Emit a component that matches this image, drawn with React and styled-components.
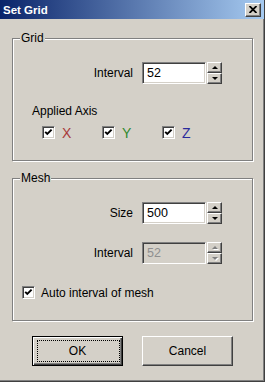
import React from 'react';
import styled, { createGlobalStyle } from 'styled-components';

const GlobalStyle = createGlobalStyle`
  body {
    margin: 0;
    font-family: 'Liberation Sans', Arial, sans-serif;
    font-size: 12px;
    color: #000;
  }
`;

const Window = styled.div`
  width: 265px;
  height: 382px;
  box-sizing: border-box;
  background: #d4d0c8;
  border-right: 1px solid #404040;
  border-bottom: 1px solid #404040;
  box-shadow: inset -1px -1px 0 #808080;
  display: flex;
  flex-direction: column;
`;

const TitleBar = styled.div`
  height: 19px;
  flex-shrink: 0;
  display: flex;
  align-items: center;
  justify-content: space-between;
  padding: 0 3px 0 3px;
  background: linear-gradient(to right, #0a246a, #a6caf0);
`;

const Title = styled.div`
  color: #fff;
  font-weight: bold;
  font-size: 11.5px;
`;

const CloseButton = styled.div`
  width: 16px;
  height: 14px;
  box-sizing: border-box;
  background: #d4d0c8;
  border: 1px solid;
  border-color: #fff #404040 #404040 #fff;
  box-shadow: inset -1px -1px 0 #808080;
  display: flex;
  align-items: center;
  justify-content: center;
`;

const Body = styled.div`
  display: flex;
  flex-direction: column;
  padding: 19px 11px 0 12px;
`;

const Group = styled.div`
  position: relative;
  height: ${p => p.$h}px;
  box-sizing: border-box;
  border: 1px solid #808080;
  box-shadow: inset 1px 1px 0 #fff, 1px 1px 0 #fff;
  margin-top: ${p => p.$mt || 0}px;
  padding-top: 23px;
  display: flex;
  flex-direction: column;
`;

const GroupLabel = styled.div`
  position: absolute;
  top: -8px;
  left: 7px;
  padding: 0 1px;
  line-height: 14px;
  background: #d4d0c8;
`;

const FieldRow = styled.div`
  display: flex;
  align-items: center;
  justify-content: flex-end;
  padding-right: 30px;
  height: 22px;
  margin-top: ${p => p.$mt || 0}px;
`;

const FieldLabel = styled.span`
  margin-right: 9px;
`;

const Field = styled.div`
  width: 64px;
  height: 22px;
  box-sizing: border-box;
  border: 1px solid;
  border-color: #808080 #fff #fff #808080;
  box-shadow: inset 1px 1px 0 #404040, inset -1px -1px 0 #d4d0c8;
  background: ${p => (p.$disabled ? '#d4d0c8' : '#fff')};
  color: ${p => (p.$disabled ? '#8f8f8f' : '#000')};
  padding-left: 4px;
  font-size: 12.5px;
  line-height: 20px;
`;

const Spinner = styled.div`
  margin-left: 1px;
  width: 15px;
  height: 22px;
  display: flex;
  flex-direction: column;
`;

const SpinButton = styled.div`
  flex: 1;
  box-sizing: border-box;
  border: 1px solid;
  border-color: #fff #404040 #404040 #fff;
  box-shadow: inset -1px -1px 0 #808080;
  background: #d4d0c8;
  display: flex;
  align-items: center;
  justify-content: center;
`;

const SectionLabel = styled.div`
  margin-top: 20px;
  padding-left: 19px;
  line-height: 14px;
`;

const AxisRow = styled.div`
  margin-top: 8px;
  padding-left: 29px;
  display: grid;
  grid-template-columns: repeat(3, 60px);
`;

const CheckItem = styled.div`
  display: flex;
  align-items: center;
  gap: ${p => p.$gap || 7}px;
  height: 13px;
`;

const Box = styled.span`
  width: 13px;
  height: 13px;
  flex-shrink: 0;
  box-sizing: border-box;
  border: 1px solid;
  border-color: #808080 #fff #fff #808080;
  box-shadow: inset 1px 1px 0 #404040, inset -1px -1px 0 #d4d0c8;
  background: #fff;
  display: flex;
  align-items: center;
  justify-content: center;
`;

const AxisName = styled.span`
  font-size: 14px;
  line-height: 14px;
  color: ${p => p.$color};
`;

const AutoRow = styled.div`
  margin-top: 22px;
  padding-left: 9px;
`;

const ButtonRow = styled.div`
  margin-top: 15px;
  display: flex;
  justify-content: center;
  gap: 19px;
`;

const Button = styled.div`
  position: relative;
  width: 91px;
  height: 30px;
  box-sizing: border-box;
  background: #d4d0c8;
  border: 1px solid;
  border-color: ${p => (p.$default ? '#000' : '#fff #404040 #404040 #fff')};
  box-shadow: ${p =>
    p.$default
      ? 'inset 1px 1px 0 #fff, inset -1px -1px 0 #404040, inset -2px -2px 0 #808080'
      : 'inset -1px -1px 0 #808080'};
  display: flex;
  align-items: center;
  justify-content: center;
  font-size: 12px;

  &::after {
    content: '';
    display: ${p => (p.$default ? 'block' : 'none')};
    position: absolute;
    top: 3px;
    left: 4px;
    right: 2px;
    bottom: 3px;
    border: 1px dotted #000;
  }
`;

function Check() {
  return (
    <Box>
      <svg width="9" height="9" viewBox="0 0 9 9">
        <polyline points="1.2,3.8 3.3,6 7.6,1.6" fill="none" stroke="#000" strokeWidth="1.9" />
      </svg>
    </Box>
  );
}

function Arrow({ up, disabled }) {
  const d = up ? 'M1 4 L4 1 L7 4 Z' : 'M1 1 L4 4 L7 1 Z';
  return (
    <svg width="8" height="5" viewBox="0 0 8 5">
      {disabled && <path d={d} fill="#fff" transform="translate(1,1)" />}
      <path d={d} fill={disabled ? '#808080' : '#000'} />
    </svg>
  );
}

function SpinField({ label, value, disabled, mt }) {
  return (
    <FieldRow $mt={mt}>
      <FieldLabel>{label}</FieldLabel>
      <Field $disabled={disabled}>{value}</Field>
      <Spinner>
        <SpinButton><Arrow up disabled={disabled} /></SpinButton>
        <SpinButton><Arrow disabled={disabled} /></SpinButton>
      </Spinner>
    </FieldRow>
  );
}

export default function App() {
  return (
    <>
      <GlobalStyle />
      <Window>
        <TitleBar>
          <Title>Set Grid</Title>
          <CloseButton>
            <svg width="8" height="7" viewBox="0 0 8 7">
              <path d="M0.5 0 L7.5 7 M7.5 0 L0.5 7" stroke="#000" strokeWidth="1.8" />
            </svg>
          </CloseButton>
        </TitleBar>

        <Body>
          <Group $h={123}>
            <GroupLabel>Grid</GroupLabel>
            <SpinField label="Interval" value="52" />
            <SectionLabel>Applied Axis</SectionLabel>
            <AxisRow>
              <CheckItem><Check /><AxisName $color="#a83a3a">X</AxisName></CheckItem>
              <CheckItem><Check /><AxisName $color="#2f8a2f">Y</AxisName></CheckItem>
              <CheckItem><Check /><AxisName $color="#2a2a9c">Z</AxisName></CheckItem>
            </AxisRow>
          </Group>

          <Group $h={143} $mt={17}>
            <GroupLabel>Mesh</GroupLabel>
            <SpinField label="Size" value="500" />
            <SpinField label="Interval" value="52" disabled mt={18} />
            <AutoRow>
              <CheckItem $gap={6}><Check /><span>Auto interval of mesh</span></CheckItem>
            </AutoRow>
          </Group>

          <ButtonRow>
            <Button $default>OK</Button>
            <Button>Cancel</Button>
          </ButtonRow>
        </Body>
      </Window>
    </>
  );
}
